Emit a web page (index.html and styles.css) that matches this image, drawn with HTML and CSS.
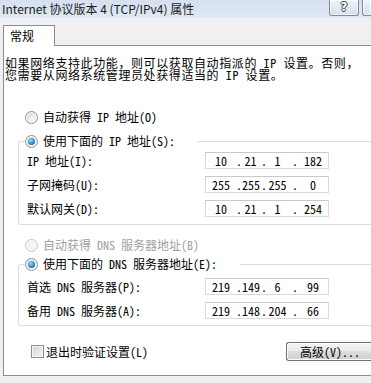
FILE: index.html
```html
<!DOCTYPE html>
<html lang="zh-CN">
<head>
    <meta charset="UTF-8">
    <meta name="viewport" content="width=device-width, initial-scale=1.0">
    <title>Internet 协议版本 4 (TCP/IPv4) 属性</title>
    <link rel="stylesheet" href="styles.css">
</head>
<body>
    <div class="titlebar">
        <span class="title">Internet 协议版本 4 (TCP/IPv4) 属性</span>
        <span class="cap-btn help">?</span>
        <span class="cap-btn close"></span>
    </div>

    <div class="tabs">
        <div class="tab">常规</div>
    </div>

    <div class="panel">
        <p class="intro">如果网络支持此功能，则可以获取自动指派的 IP 设置。否则，<br>您需要从网络系统管理员处获得适当的 IP 设置。</p>

        <div class="option auto-ip"><span class="radio"></span>自动获得 IP 地址(O)</div>

        <fieldset class="group group-ip">
            <legend class="option legend-ip"><span class="radio checked"></span>使用下面的 IP 地址(S):</legend>
            <div class="field-row">
                <span>IP 地址(I):</span>
                <div class="ip-box"><span>10</span><span class="dot">.</span><span>21</span><span class="dot">.</span><span>1</span><span class="dot">.</span><span>182</span></div>
            </div>
            <div class="field-row">
                <span>子网掩码(U):</span>
                <div class="ip-box"><span>255</span><span class="dot">.</span><span>255</span><span class="dot">.</span><span>255</span><span class="dot">.</span><span>0</span></div>
            </div>
            <div class="field-row">
                <span>默认网关(D):</span>
                <div class="ip-box"><span>10</span><span class="dot">.</span><span>21</span><span class="dot">.</span><span>1</span><span class="dot">.</span><span>254</span></div>
            </div>
        </fieldset>

        <div class="option auto-dns disabled"><span class="radio"></span>自动获得 DNS 服务器地址(B)</div>

        <fieldset class="group group-dns">
            <legend class="option legend-dns"><span class="radio checked"></span>使用下面的 DNS 服务器地址(E):</legend>
            <div class="field-row">
                <span>首选 DNS 服务器(P):</span>
                <div class="ip-box"><span>219</span><span class="dot">.</span><span>149</span><span class="dot">.</span><span>6</span><span class="dot">.</span><span>99</span></div>
            </div>
            <div class="field-row">
                <span>备用 DNS 服务器(A):</span>
                <div class="ip-box"><span>219</span><span class="dot">.</span><span>148</span><span class="dot">.</span><span>204</span><span class="dot">.</span><span>66</span></div>
            </div>
        </fieldset>

        <div class="footer-row">
            <div class="option check-option"><span class="checkbox"></span>退出时验证设置(L)</div>
            <button type="button" class="btn">高级(V)...</button>
        </div>
    </div>
</body>
</html>
```

FILE: styles.css
```css
body {
    margin: 0;
    width: 371px;
    height: 383px;
    overflow: hidden;
    background-color: #f0f0f0;
    font-family: "Noto Sans Mono CJK SC", "Noto Sans CJK SC", monospace;
    font-size: 12px;
    color: #000;
}

.titlebar {
    display: flex;
    height: 18px;
    background: linear-gradient(#d5e1f0, #e0e9f4);
    white-space: nowrap;
    font-family: "Noto Sans CJK SC", sans-serif;
}

.title {
    width: 327px;
    flex-shrink: 0;
    padding-left: 2px;
    line-height: 17px;
    color: #1b1b1b;
}

.cap-btn {
    flex-shrink: 0;
    width: 28px;
    height: 15px;
    border: 1px solid #7f8a99;
    border-top: none;
    border-radius: 0 0 3px 3px;
    background: linear-gradient(#eef3f9, #d6e0ee);
    box-shadow: inset 0 0 0 1px rgba(255, 255, 255, 0.7);
    text-align: center;
    line-height: 15px;
    font-family: "DejaVu Sans", sans-serif;
    font-weight: bold;
    font-size: 12px;
    color: #fff;
    text-shadow: 1px 0 0 #3a3f48, -1px 0 0 #3a3f48, 0 1px 0 #3a3f48, 0 -1px 0 #3a3f48;
}

.close {
    width: 8px;
    margin-left: 3px;
    border-right: none;
    border-radius: 0 0 0 3px;
}

.tabs {
    padding: 7px 0 0 3px;
}

.tab {
    position: relative;
    z-index: 1;
    width: 44px;
    height: 20px;
    margin-bottom: -1px;
    padding-left: 6px;
    border: 1px solid #898c95;
    border-bottom: none;
    background-color: #fff;
    line-height: 20px;
}

.panel {
    box-sizing: border-box;
    height: 331px;
    margin-left: 3px;
    border: 1px solid #898c95;
    border-right: none;
    background-color: #fff;
}

.intro {
    margin: 0;
    padding: 11px 0 0 1px;
    line-height: 12px;
    letter-spacing: 0.6px;
    white-space: nowrap;
}

.option {
    display: flex;
    align-items: center;
    height: 16px;
    line-height: 16px;
    white-space: nowrap;
}

.radio {
    box-sizing: border-box;
    position: relative;
    width: 13px;
    height: 13px;
    margin-right: 5px;
    border: 1px solid #8f8f8f;
    border-radius: 50%;
    background: radial-gradient(circle at 60% 65%, #f6f6f6 0%, #e2e2e2 55%, #cfcfcf 100%);
    box-shadow: inset 0 0 0 1px #fff;
}

.radio.checked::after {
    content: "";
    position: absolute;
    left: 2px;
    top: 2px;
    width: 7px;
    height: 7px;
    border-radius: 50%;
    background: radial-gradient(circle at 40% 35%, #9de0ff 0%, #3a9ad8 45%, #0f4e8a 100%);
}

.auto-ip {
    margin-top: 28px;
    padding-left: 21px;
}

.auto-dns {
    margin-top: 12px;
    padding-left: 21px;
}

.disabled {
    color: #a0a0a0;
}

.disabled .radio {
    border-color: #c4c4c4;
    background: #f4f4f4;
}

.group {
    margin: 8px 0 0 14px;
    padding: 3px 0 7px 8px;
    border: 1px solid #d5dfe5;
    border-right: none;
    border-radius: 3px 0 0 3px;
    min-width: 0;
}

.group-dns {
    margin-top: 3px;
    padding-top: 6px;
    padding-bottom: 6px;
}

.group legend {
    box-sizing: border-box;
    margin-left: -2px;
    padding: 0;
}

.legend-ip {
    width: 173px;
}

.legend-dns {
    width: 215px;
}

.field-row {
    display: grid;
    grid-template-columns: 178px 124px;
    align-items: center;
    height: 17px;
    margin-bottom: 7px;
    white-space: nowrap;
}

.field-row:last-child {
    margin-bottom: 0;
}

.ip-box {
    box-sizing: border-box;
    display: grid;
    grid-template-columns: 30px 6px 17px 8px 21px 10px 30px;
    height: 17px;
    border: 1px solid #dadada;
    border-top-color: #c9c9c9;
    line-height: 15px;
    text-align: center;
}

.ip-box .dot {
    text-align: right;
}

.footer-row {
    display: grid;
    grid-template-columns: 282px auto;
    align-items: center;
    margin-top: 16px;
}

.check-option {
    padding-left: 27px;
}

.checkbox {
    box-sizing: border-box;
    width: 13px;
    height: 13px;
    margin-right: 2px;
    border: 1px solid #8f8f8f;
    background: linear-gradient(135deg, #d2d2d2, #f6f6f6);
    box-shadow: inset 0 0 0 1px #f4f4f4;
}

.btn {
    height: 19px;
    padding: 0 0 0 13px;
    border: 1px solid #707070;
    border-right: none;
    border-radius: 3px 0 0 3px;
    background: linear-gradient(#f3f3f3 0%, #ebebeb 45%, #dddddd 50%, #cfcfcf 100%);
    box-shadow: inset 1px 1px 0 #fcfcfc, inset 0 -1px 0 #fcfcfc;
    font-family: inherit;
    font-size: 12px;
    line-height: 17px;
    text-align: left;
    color: #000;
}
```
